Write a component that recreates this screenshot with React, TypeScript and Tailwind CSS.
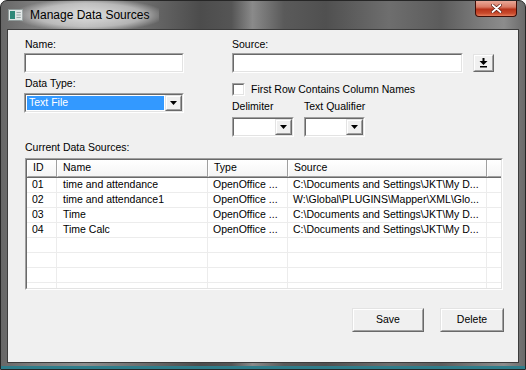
import type { ReactNode } from 'react';

const ROWS = [
  { id: '01', name: 'time and attendance', type: 'OpenOffice ...', source: 'C:\\Documents and Settings\\JKT\\My D...' },
  { id: '02', name: 'time and attendance1', type: 'OpenOffice ...', source: 'W:\\Global\\PLUGINS\\Mapper\\XML\\Glo...' },
  { id: '03', name: 'Time', type: 'OpenOffice ...', source: 'C:\\Documents and Settings\\JKT\\My D...' },
  { id: '04', name: 'Time Calc', type: 'OpenOffice ...', source: 'C:\\Documents and Settings\\JKT\\My D...' },
  { id: '', name: '', type: '', source: '' },
  { id: '', name: '', type: '', source: '' },
  { id: '', name: '', type: '', source: '' },
  { id: '', name: '', type: '', source: '' },
];

const COLS = [
  { label: 'ID', w: 'w-[30px]' },
  { label: 'Name', w: 'w-[151px]' },
  { label: 'Type', w: 'w-[80px]' },
  { label: 'Source', w: 'w-[199px]' },
];

// classic 3d sunken edge (edit boxes, combos, list)
function Sunken({ className = '', children }: { className?: string; children?: ReactNode }) {
  return (
    <div className={`border border-t-[#a0a0a0] border-l-[#a0a0a0] border-b-white border-r-white ${className}`}>
      <div className="h-full border border-t-[#696969] border-l-[#696969] border-b-[#e3e3e3] border-r-[#e3e3e3] bg-white">
        {children}
      </div>
    </div>
  );
}

// classic 3d raised edge (buttons)
function Raised({ className = '', children }: { className?: string; children?: ReactNode }) {
  return (
    <div className={`border border-t-[#e3e3e3] border-l-[#e3e3e3] border-b-[#696969] border-r-[#696969] bg-[#f0f0f0] ${className}`}>
      <div className="h-full border border-t-white border-l-white border-b-[#a0a0a0] border-r-[#a0a0a0] flex items-center justify-center">
        {children}
      </div>
    </div>
  );
}

function Triangle() {
  return (
    <svg width="7" height="4" viewBox="0 0 7 4">
      <path d="M0 0h7L3.5 4z" fill="#000" />
    </svg>
  );
}

function Combo({ className, value, selected }: { className: string; value?: string; selected?: boolean }) {
  return (
    <Sunken className={`${className} h-[20px]`}>
      <div className="flex h-full">
        <div className="flex-1 p-px">
          {value && (
            <div className={`h-full pl-[2px] flex items-center ${selected ? 'bg-[#3399ff] text-white' : ''}`}>{value}</div>
          )}
        </div>
        <Raised className="w-[17px]">
          <Triangle />
        </Raised>
      </div>
    </Sunken>
  );
}

function Label({ children, className = '' }: { children: ReactNode; className?: string }) {
  return <div className={`h-[13px] leading-[13px] text-black whitespace-nowrap ${className}`}>{children}</div>;
}

export default function App() {
  return (
    <div className="w-[526px] h-[370px] bg-white overflow-hidden font-['Liberation_Sans',Arial,sans-serif] text-[10.5px]">
      <div className="w-full h-full flex flex-col rounded-t-[7px] border border-[#262626] px-[6px] pb-[6px] bg-[linear-gradient(to_top,#2f7d8a_0px,#2f7d8a_3px,transparent_3px),linear-gradient(to_right,#676767_0%,#7c7c7c_6%,#8e8e8e_16%,#6a6a6a_28%,#4c4c4c_38%,#555_44%,#8a8a8a_48%,#5a5a5a_54%,#505050_62%,#6e6e6e_74%,#5c5c5c_84%,#7e7e7e_92%,#8c8c8c_96%,#6a6a6a_100%)]">
        {/* Title bar */}
        <div className="h-[28px] -mx-[6px] flex justify-between pl-[7px] pr-[8px]">
          <div className="flex items-center">
            <svg width="15" height="12" viewBox="0 0 15 12" className="mb-[1px]">
              <rect x="0.5" y="0.5" width="14" height="11" fill="#dfe5e4" stroke="#8f9a99" />
              <rect x="2" y="2" width="5" height="8" fill="#2f8878" />
              <rect x="8.5" y="3" width="4.5" height="1" fill="#9aa8a8" />
              <rect x="8.5" y="5.5" width="4.5" height="1" fill="#9aa8a8" />
              <rect x="8.5" y="8" width="4.5" height="1" fill="#9aa8a8" />
            </svg>
            <span className="ml-[-3px] px-[10px] py-[6px] text-[12px] text-black bg-[radial-gradient(ellipse_at_center,rgba(255,255,255,0.7)_0%,rgba(255,255,255,0.45)_55%,rgba(255,255,255,0)_78%)]">
              Manage Data Sources
            </span>
          </div>
          <div className="w-[42px] h-[16px] rounded-b-[4px] border border-t-0 border-[#3e0d06] flex items-center justify-center bg-[linear-gradient(to_bottom,#e9a898_0%,#d97a64_40%,#b8331a_55%,#c84a2c_82%,#e47c5c_100%)]">
            <svg width="11" height="9" viewBox="0 0 11 9">
              <path d="M1.5 1L9.5 8M9.5 1L1.5 8" stroke="#5a1a10" strokeWidth="3.2" strokeLinecap="round" />
              <path d="M1.5 1L9.5 8M9.5 1L1.5 8" stroke="#fff" strokeWidth="1.8" strokeLinecap="round" />
            </svg>
          </div>
        </div>

        {/* Client area */}
        <div className="flex-1 border border-[#3c3c3c] bg-[#f0f0f0] pl-[16px] pt-[8px] flex flex-col">
          <div className="flex">
            {/* left column */}
            <div className="w-[160px] flex flex-col">
              <Label className="ml-px">Name:</Label>
              <Sunken className="mt-[2px] h-[20px]" />
              <Label className="ml-px mt-[4px]">Data Type:</Label>
              <Combo className="mt-[3px] w-[160px]" value="Text File" selected />
            </div>

            {/* right column */}
            <div className="ml-[48px] flex flex-col">
              <Label>Source:</Label>
              <div className="mt-[2px] flex items-center">
                <Sunken className="w-[231px] h-[20px]" />
                <Raised className="ml-[10px] w-[21px] h-[18px]">
                  <svg width="9" height="10" viewBox="0 0 9 10">
                    <rect x="3.5" y="0" width="2" height="3" fill="#000" />
                    <path d="M0.5 3h8L4.5 7z" fill="#000" />
                    <rect x="1" y="8" width="7" height="1.5" fill="#000" />
                  </svg>
                </Raised>
              </div>
              <div className="mt-[10px] flex items-center h-[13px]">
                <Sunken className="w-[13px] h-[13px]" />
                <span className="ml-[6px] whitespace-nowrap">First Row Contains Column Names</span>
              </div>
              <div className="mt-[4px] flex">
                <Label className="w-[72px]">Delimiter</Label>
                <Label>Text Qualifier</Label>
              </div>
              <div className="mt-[4px] flex gap-[10px]">
                <Combo className="w-[62px]" />
                <Combo className="w-[61px]" />
              </div>
            </div>
          </div>

          <Label className="mt-[4px] ml-px">Current Data Sources:</Label>

          {/* list view */}
          <Sunken className="mt-[4px] ml-px w-[478px] h-[132px]">
            <div className="h-full overflow-hidden">
              <div className="flex h-[18px] border-b border-[#696969] bg-[linear-gradient(to_bottom,#ffffff,#f4f4f4)]">
                {COLS.map((c) => (
                  <div
                    key={c.label}
                    className={`${c.w} shrink-0 flex items-center pl-[5px] border-l border-l-white border-r border-r-[#a0a0a0] border-b border-b-[#a0a0a0]`}
                  >
                    {c.label}
                  </div>
                ))}
                <div className="flex-1 border-l border-l-white border-b border-b-[#a0a0a0]" />
              </div>
              {ROWS.map((r, i) => (
                <div key={i} className="flex h-[15px] border-b border-[#ececec]">
                  <div className="w-[30px] shrink-0 pl-[5px] border-r border-[#ececec] flex items-center">{r.id}</div>
                  <div className="w-[151px] shrink-0 pl-[6px] border-r border-[#ececec] flex items-center whitespace-nowrap">{r.name}</div>
                  <div className="w-[80px] shrink-0 pl-[5px] border-r border-[#ececec] flex items-center whitespace-nowrap">{r.type}</div>
                  <div className="w-[199px] shrink-0 pl-[5px] border-r border-[#ececec] flex items-center whitespace-nowrap overflow-hidden">{r.source}</div>
                  <div className="flex-1" />
                </div>
              ))}
            </div>
          </Sunken>

          <div className="mt-[18px] flex justify-end gap-[16px] pr-[14px]">
            <Raised className="w-[72px] h-[24px]">Save</Raised>
            <Raised className="w-[64px] h-[24px]">Delete</Raised>
          </div>
        </div>
      </div>
    </div>
  );
}
